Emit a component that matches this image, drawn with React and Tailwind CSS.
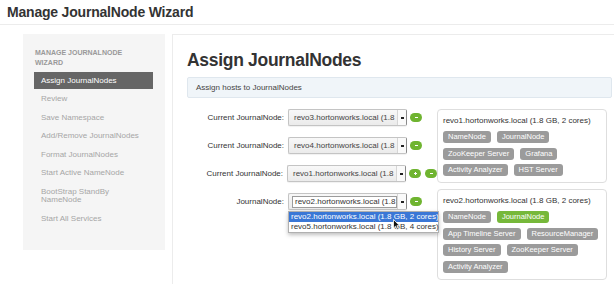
import React from "react";

const font = "font-['Liberation_Sans',Arial,Helvetica,sans-serif]";

function Pill({ sign }) {
  return (
    <span className="relative flex h-[9px] w-[12px] items-center justify-center rounded-full bg-[#6fb430]">
      <span className="h-[1px] w-[3px] bg-white" />
      {sign === "+" && <span className="absolute h-[3px] w-[1px] bg-white" />}
    </span>
  );
}

function Select({ text, focused }) {
  return (
    <div className="relative flex h-[17px] w-[119px] items-center overflow-hidden rounded-[2px] border border-[#c4c4c4] border-r-[#8a8a8a] bg-gradient-to-b from-[#f8f8f8] to-[#ebebeb] shadow-[0_1px_1px_rgba(0,0,0,0.06)]">
      {focused ? (
        <div className="ml-[3px] flex h-[12px] w-[105px] items-center overflow-hidden whitespace-nowrap border border-[#9c9c9c] bg-white pl-[2px] text-[8px] text-[#333]">
          {text}
        </div>
      ) : (
        <span className="whitespace-nowrap pl-[5px] text-[8px] text-[#444]">{text}</span>
      )}
      <div className="absolute right-0 top-0 flex h-full w-[9px] items-center justify-center border-l border-[#d6d6d6] bg-[#fafafa]">
        <span className="h-[2px] w-[3px] bg-[#222]" />
      </div>
    </div>
  );
}

function Badge({ children, green }) {
  return (
    <span
      className={`flex h-[12px] items-center rounded-[3px] px-[5px] text-[7.5px] leading-none text-white ${
        green ? "bg-[#76b83a]" : "bg-[#9b9b9b]"
      }`}
    >
      {children}
    </span>
  );
}

function Row({ label, text, pills, focused, dropdown }) {
  return (
    <div className="flex h-[17px] items-center">
      <div className="w-[101px] whitespace-nowrap pr-[4px] text-right text-[8px] text-[#333]">{label}</div>
      <div className="relative">
        <Select text={text} focused={focused} />
        {dropdown && (
          <div className="absolute left-0 top-[18px] z-10 w-[151px] border border-[#b0b0b0] bg-white text-[8px] shadow-[0_2px_4px_rgba(0,0,0,0.25)]">
            <div className="flex h-[10px] items-center whitespace-nowrap bg-[#3a77d6] pl-[2px] text-white">
              revo2.hortonworks.local (1.8 GB, 2 cores)
            </div>
            <div className="flex h-[10px] items-center whitespace-nowrap pl-[2px] text-[#333]">
              revo5.hortonworks.local (1.8 GB, 4 cores)
            </div>
            <svg className="absolute left-[104px] top-[7px]" width="7" height="11" viewBox="0 0 7 11">
              <path d="M0.5 0.5 L0.5 9 L2.5 7.2 L4 10.5 L5.3 9.9 L3.9 6.7 L6.5 6.7 Z" fill="#111" stroke="#fff" strokeWidth="0.8" />
            </svg>
          </div>
        )}
      </div>
      <div className="ml-[3px] flex gap-[4px]">
        {pills.map((p, i) => (
          <Pill key={i} sign={p} />
        ))}
      </div>
    </div>
  );
}

function HostBox({ host, rows, height, className = "" }) {
  return (
    <div className={`rounded-[4px] border border-[#dedede] px-[5px] pt-[5px] ${height} ${className}`}>
      <div className="whitespace-nowrap text-[8px] leading-[11px] text-[#333]">{host}</div>
      <div className="mt-[5px] flex flex-col gap-[4.5px]">
        {rows.map((r, i) => (
          <div key={i} className="flex gap-[6px]">
            {r.map((b) => (
              <Badge key={b.n} green={b.g}>
                {b.n}
              </Badge>
            ))}
          </div>
        ))}
      </div>
    </div>
  );
}

export default function App() {
  const items = [
    ["Review"],
    ["Save Namespace"],
    ["Add/Remove JournalNodes"],
    ["Format JournalNodes"],
    ["Start Active NameNode"],
    ["BootStrap StandBy", "NameNode"],
    ["Start All Services"],
  ];
  const g = (n) => ({ n });
  return (
    <div className={`h-[284px] w-[614px] overflow-hidden bg-white ${font}`}>
      <div className="flex h-[25px] items-center border-b border-[#ececec] px-[7px]">
        <h1 className="text-[14px] font-bold leading-none tracking-[-0.2px] text-[#333]">Manage JournalNode Wizard</h1>
      </div>
      <div className="flex pt-[9px]">
        <div className="ml-[23px] h-[216px] w-[142px] shrink-0 bg-[#f5f5f5]">
          <div className="pl-[12px] pt-[14px] text-[7px] font-bold uppercase leading-[10px] text-[#999]">
            Manage JournalNode
            <br />
            Wizard
          </div>
          <div className="ml-[11px] mt-[4px] flex h-[17px] w-[119px] items-center bg-[#666] pl-[7px] text-[8px] text-white">
            Assign JournalNodes
          </div>
          <div className="mt-[1px] pl-[18px] text-[8px] text-[#a6a6a6]">
            {items.map((t) => (
              <div key={t[0]} className="whitespace-nowrap py-[5px] leading-[8.5px]">
                {t.map((l, i) => (
                  <div key={i}>{l}</div>
                ))}
              </div>
            ))}
          </div>
        </div>
        <div className="ml-[7px] h-[260px] flex-1 border-l border-t border-[#ececec] pl-[14px] pr-[2px] pt-[14px]">
          <h2 className="text-[17.5px] font-bold leading-[22px] tracking-[-0.3px] text-[#333]">Assign JournalNodes</h2>
          <div className="mt-[6px] flex h-[21px] items-center rounded-[2px] border border-[#dfe7ee] bg-[#f0f5f9] pl-[8px] text-[8px] text-[#444]">
            Assign hosts to JournalNodes
          </div>
          <div className="mt-[11px] flex">
            <div className="flex w-[250px] shrink-0 flex-col gap-[11px]">
              <Row label="Current JournalNode:" text="revo3.hortonworks.local (1.8" pills={["-"]} />
              <Row label="Current JournalNode:" text="revo4.hortonworks.local (1.8" pills={["-"]} />
              <Row label="Current JournalNode:" text="revo1.hortonworks.local (1.8" pills={["+", "-"]} />
              <Row label="JournalNode:" text="revo2.hortonworks.local (1.8" pills={["-"]} focused dropdown />
            </div>
            <div className="w-[170px] shrink-0">
              <HostBox
                host="revo1.hortonworks.local (1.8 GB, 2 cores)"
                height="h-[74px]"
                rows={[
                  [g("NameNode"), g("JournalNode")],
                  [g("ZooKeeper Server"), g("Grafana")],
                  [g("Activity Analyzer"), g("HST Server")],
                ]}
              />
              <HostBox
                host="revo2.hortonworks.local (1.8 GB, 2 cores)"
                height="h-[91px]"
                className="mt-[6px]"
                rows={[
                  [g("NameNode"), { n: "JournalNode", g: true }],
                  [g("App Timeline Server"), g("ResourceManager")],
                  [g("History Server"), g("ZooKeeper Server")],
                  [g("Activity Analyzer")],
                ]}
              />
            </div>
          </div>
        </div>
      </div>
    </div>
  );
}
